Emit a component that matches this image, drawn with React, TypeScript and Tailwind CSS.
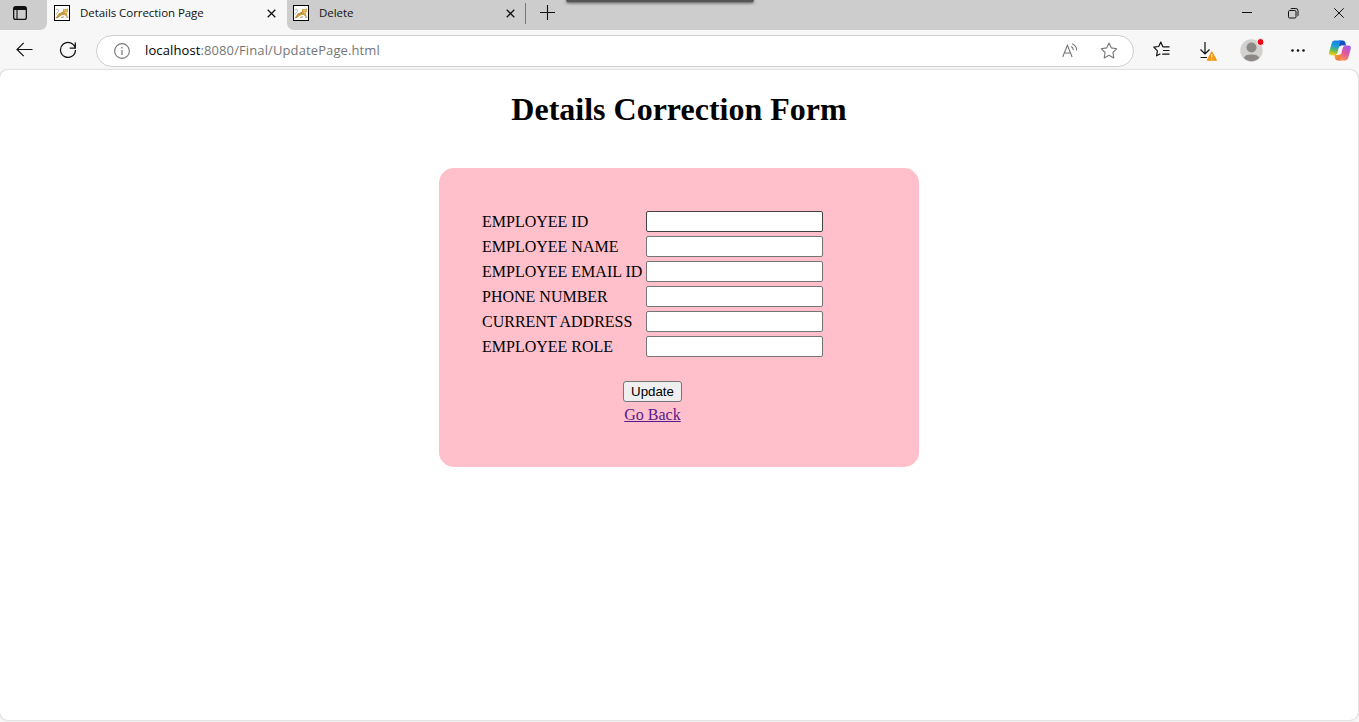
import React from "react";

const FIELDS = [
  "EMPLOYEE ID",
  "EMPLOYEE NAME",
  "EMPLOYEE EMAIL ID",
  "PHONE NUMBER",
  "CURRENT ADDRESS",
  "EMPLOYEE ROLE",
];

function TomcatIcon() {
  return (
    <svg width="16" height="16" viewBox="0 0 16 16" className="shrink-0">
      <rect x="0.5" y="0.5" width="15" height="15" fill="#fff" stroke="#000" />
      <path d="M1.8 4.8C3.2 3.4 5 4.6 4.4 6.4 3.8 7.6 2.4 8 2 9.6" fill="none" stroke="#a5a49c" strokeWidth="0.9" />
      <path d="M2 12.6 4.6 8.4 8.6 6.9 9.4 3.4 10.8 4.2 12.4 4.1 13.8 3.2 14 6.6 12.8 8.6 13.8 11.4 12.4 11.6 10.8 10 8.2 10 6 11.6 3.4 12.9z" fill="#d2a041" />
      <path d="M1.8 13 4.7 11.8M7 12.5 10.2 11.8M12 12.1 14.4 12.1M5.6 8.3 6.2 9.8M8 7.3 8.4 9" stroke="#8a7350" strokeWidth="0.8" />
      <path d="M10.5 5.8h1M12.4 5.8h.8M11.2 7.4h1.6" stroke="#fff2c2" strokeWidth="0.8" />
    </svg>
  );
}

function TabClose() {
  return (
    <svg width="9" height="9" viewBox="0 0 9 9" className="shrink-0">
      <path d="M.7.7 8.3 8.3M8.3.7.7 8.3" stroke="#111" strokeWidth="1.25" />
    </svg>
  );
}

function TabStrip() {
  return (
    <div className="flex h-[30px] bg-[#f7f7f7] font-['Open_Sans','Noto_Sans',sans-serif] text-[11.5px] text-[#111]">
      <div className="h-full w-[47px] rounded-br-[7px] bg-[#cdcdcd] pl-[13px] pt-[6px]">
        <svg width="14" height="14" viewBox="0 0 14 14">
          <rect x="0.65" y="0.65" width="12.7" height="12.7" rx="2.2" fill="none" stroke="#111" strokeWidth="1.3" />
          <path d="M.7 4V2.8Q.7.7 2.8.7h8.4q2.1 0 2.1 2.1V4z" fill="#111" />
          <path d="M4 4v9.3" stroke="#111" strokeWidth="1.1" />
        </svg>
      </div>
      <div className="flex h-[26px] w-[240px] items-center pl-[7px] pr-[11px]">
        <TomcatIcon />
        <span className="ml-[10px] flex-1 whitespace-nowrap tracking-[-0.06px]">Details Correction Page</span>
        <TabClose />
      </div>
      <div className="flex h-full flex-1 items-start rounded-bl-[7px] bg-[#cdcdcd]">
        <div className="flex h-[26px] w-[238px] items-center pl-[6px] pr-[10px]">
          <TomcatIcon />
          <span className="ml-[10px] flex-1 tracking-[-0.06px]">Delete</span>
          <TabClose />
        </div>
        <div className="mt-[3px] h-[21px] w-px bg-[#777]" />
        <svg width="15" height="15" viewBox="0 0 15 15" className="ml-[14px] mt-[5px]">
          <path d="M0 7.5h15M7.5 0v15" stroke="#111" strokeWidth="1.1" />
        </svg>
        <div className="ml-[11px] h-[2px] w-[188px] rounded-b-[2px] bg-[#555] shadow-[0_1px_3px_#333]" />
        <svg width="10" height="2" viewBox="0 0 10 2" className="ml-auto mt-[12px]">
          <path d="M0 .5h10" stroke="#111" />
        </svg>
        <svg width="11" height="11" viewBox="0 0 11 11" fill="none" stroke="#111" className="ml-[36px] mt-[8px]">
          <rect x="0.5" y="2.5" width="7.5" height="7.5" rx="1.2" />
          <path d="M2.5 1Q3 .5 4 .5h3.8q2.2 0 2.2 2.2V7q0 .8-.5 1.2" />
        </svg>
        <svg width="10" height="10" viewBox="0 0 10 10" className="ml-[35px] mr-[15px] mt-[8px]">
          <path d="M.3.3 9.7 9.7M9.7.3.3 9.7" stroke="#111" />
        </svg>
      </div>
    </div>
  );
}

function StarShape({ color }: { color: string }) {
  return (
    <svg width="18" height="17" viewBox="0 0 18 17" fill="none" stroke={color} strokeWidth="1.1" strokeLinejoin="round">
      <path d="m9 1 2.4 4.9 5.4.8-3.9 3.8.9 5.4L9 13.3l-4.8 2.6.9-5.4L1.2 6.7l5.4-.8z" />
    </svg>
  );
}

function CopilotIcon() {
  return (
    <svg width="22" height="21" viewBox="0 0 22 21">
      <defs>
        <linearGradient id="cpLeft" x1="0.6" y1="0" x2="0.4" y2="1">
          <stop offset="0.05" stopColor="#1a83e6" />
          <stop offset="0.4" stopColor="#20a0d4" />
          <stop offset="0.68" stopColor="#62b958" />
          <stop offset="1" stopColor="#efcf16" />
        </linearGradient>
        <linearGradient id="cpRight" x1="0.7" y1="0" x2="0.3" y2="1">
          <stop offset="0" stopColor="#a45be9" />
          <stop offset="0.5" stopColor="#e3569f" />
          <stop offset="1" stopColor="#fa9451" />
        </linearGradient>
        <linearGradient id="cpBottom" x1="0" y1="0" x2="1" y2="1">
          <stop offset="0" stopColor="#f6b51e" />
          <stop offset="1" stopColor="#f1584c" />
        </linearGradient>
      </defs>
      <path d="M10 .5h4q1.6 0 2.1 1.6l1 3.4h-3q-1.8 0-2.4 1.3L9.4 6z" fill="#174fc1" />
      <path d="M12 20.4H8.5q-1.8 0-2.3-1.7L5.2 15h2.4q1.7 0 2.3-1.3l3.6 1.3z" fill="url(#cpBottom)" />
      <path d="M5.8.5H13q-1.4.2-1.9 2.1L8.5 12.4q-.7 2.8-3.6 2.8H2.6Q-.6 15.2.2 12L2.6 3.6Q3.3.5 5.8.5z" fill="url(#cpLeft)" />
      <path d="M16.2 20.4H9.1q1.4-.2 1.9-2.1l2.6-9.9q.7-3 3.5-3h2.3q3.2 0 2.4 3.3l-2.4 8.6q-.7 3.1-3.2 3.1z" fill="url(#cpRight)" />
      <path d="M10.4 7.2q.5-1.7 2.2-1.7h2q-1.5.5-2 2.6l-1.1 4.9q-.5 2.1-2.3 2.1h-2q1.3-.6 1.8-2.5z" fill="#f7f7f7" />
    </svg>
  );
}

function Toolbar() {
  return (
    <div className="flex h-[39px] items-center bg-[#f7f7f7]">
      <svg width="17" height="15" viewBox="0 0 17 15" fill="none" stroke="#111" strokeWidth="1.2" className="ml-[16px]">
        <path d="M16.5 7.5H1M7.7.8 1 7.5l6.7 6.7" />
      </svg>
      <svg width="18" height="18" viewBox="0 0 18 18" fill="none" stroke="#111" strokeWidth="1.25" className="ml-[26px]">
        <path d="M16.3 7.2A7.5 7.5 0 1 0 16.5 9M16.3 1.5v5.7h-5.6" />
      </svg>
      <div className="ml-[19px] mt-[2px] flex h-[32px] w-[1038px] items-center rounded-full border border-[#cecece] bg-white pl-[17px] pr-[15px]">
        <svg width="16" height="16" viewBox="0 0 16 16" fill="none" stroke="#777" className="shrink-0">
          <circle cx="8" cy="8" r="7.4" strokeWidth="1.1" />
          <path d="M8 7v5M8 4v1.5" strokeWidth="1.2" />
        </svg>
        <div className="ml-[15px] flex-1 whitespace-nowrap font-['Open_Sans','Noto_Sans',sans-serif] text-[13px] tracking-[0.11px] text-[#767676]">
          <span className="text-black">localhost</span>:8080/Final/UpdatePage.html
        </div>
        <svg width="17" height="15" viewBox="0 0 17 15" fill="none" stroke="#777" strokeWidth="1.1" className="mb-px mr-[21px]">
          <path d="M.7 14 5.4 2.3 10.1 14M2.4 10h6M9.2 3.4q2 1 2.1 3.6M10.1.8q4.4 1.8 4.6 6.6" />
        </svg>
        <StarShape color="#777" />
      </div>
      <svg width="17" height="17" viewBox="0 0 17 17" fill="none" stroke="#111" strokeWidth="1.2" strokeLinejoin="round" className="ml-[19px]">
        <path d="M11 5.8 9.8 5.7 7.8 1 5.7 5.5.8 6.2l3.6 3.6-.8 5 3.8-2.1M10 5.8h6.5M10 9.5h6.5M9.2 13.2h7.3" />
      </svg>
      <svg width="18" height="20" viewBox="0 0 18 20" fill="none" className="ml-[29px] mt-[3px]">
        <path d="M6 1v12M1.5 8.5 6 13l4.5-4.5M1.5 16.5H8" stroke="#111" strokeWidth="1.2" />
        <path d="m12.8 10.7 4.7 8.5H8.2z" fill="#f7950b" stroke="#f7950b" strokeLinejoin="round" />
        <path d="M12.8 13v3.5M12.8 17.5v1" stroke="#fff" />
      </svg>
      <svg width="24" height="24" viewBox="0 0 24 24" className="ml-[23px]">
        <circle cx="11.5" cy="12.5" r="11.2" fill="#d2d1cf" />
        <circle cx="11.5" cy="9.5" r="5" fill="#8c8885" />
        <path d="M3.8 20q1.2-3.4 7.7-3.4t7.7 3.4a11 11 0 0 1-15.4 0z" fill="#8c8885" />
        <circle cx="20.5" cy="4" r="3.5" fill="#e60b16" stroke="#f7f7f7" />
      </svg>
      <svg width="14" height="3" viewBox="0 0 14 3" fill="#111" className="ml-[27px] mt-px">
        <circle cx="1.5" cy="1.5" r="1.3" />
        <circle cx="7" cy="1.5" r="1.3" />
        <circle cx="12.5" cy="1.5" r="1.3" />
      </svg>
      <div className="ml-[24px] mt-[2px]">
        <CopilotIcon />
      </div>
    </div>
  );
}

export default function App() {
  return (
    <div className="flex h-[722px] w-[1359px] flex-col overflow-hidden bg-[#f7f7f7]">
      <TabStrip />
      <Toolbar />
      <main className="mt-px h-[650px] w-[1358px] rounded-[8px] bg-white font-['Liberation_Serif',serif] text-[16px] leading-[18px] text-black shadow-[0_0_2px_#aaa]">
        <h1 className="pt-[21px] text-center text-[32px] font-bold leading-[37px]">Details Correction Form</h1>
        <form className="ml-[439px] mt-[40px] h-[299px] w-[480px] rounded-[15px] bg-[#ffc0cb] pl-[43px] pt-[43px]">
          <div className="flex w-[341px] flex-col gap-[4px]">
            {FIELDS.map((label, i) => (
              <label key={label} className="flex h-[21px] items-center justify-between whitespace-nowrap">
                <span>{label}</span>
                <input
                  type="text"
                  className={
                    i === 0
                      ? "h-[21px] w-[177px] rounded-[2px] border border-[#444] bg-white"
                      : "h-[21px] w-[177px] rounded-[2px] border border-[#767676] bg-white"
                  }
                />
              </label>
            ))}
          </div>
          <div className="mt-[24px] flex w-[341px] flex-col items-center">
            <button
              type="button"
              className="h-[21px] w-[59px] rounded-[3px] border border-[#767676] bg-[#efefef] font-['Liberation_Sans',sans-serif] text-[13.333px] leading-[19px]"
            >
              Update
            </button>
            <a href="#" className="mt-[4px] text-[#551a8b] underline">
              Go Back
            </a>
          </div>
        </form>
      </main>
    </div>
  );
}
